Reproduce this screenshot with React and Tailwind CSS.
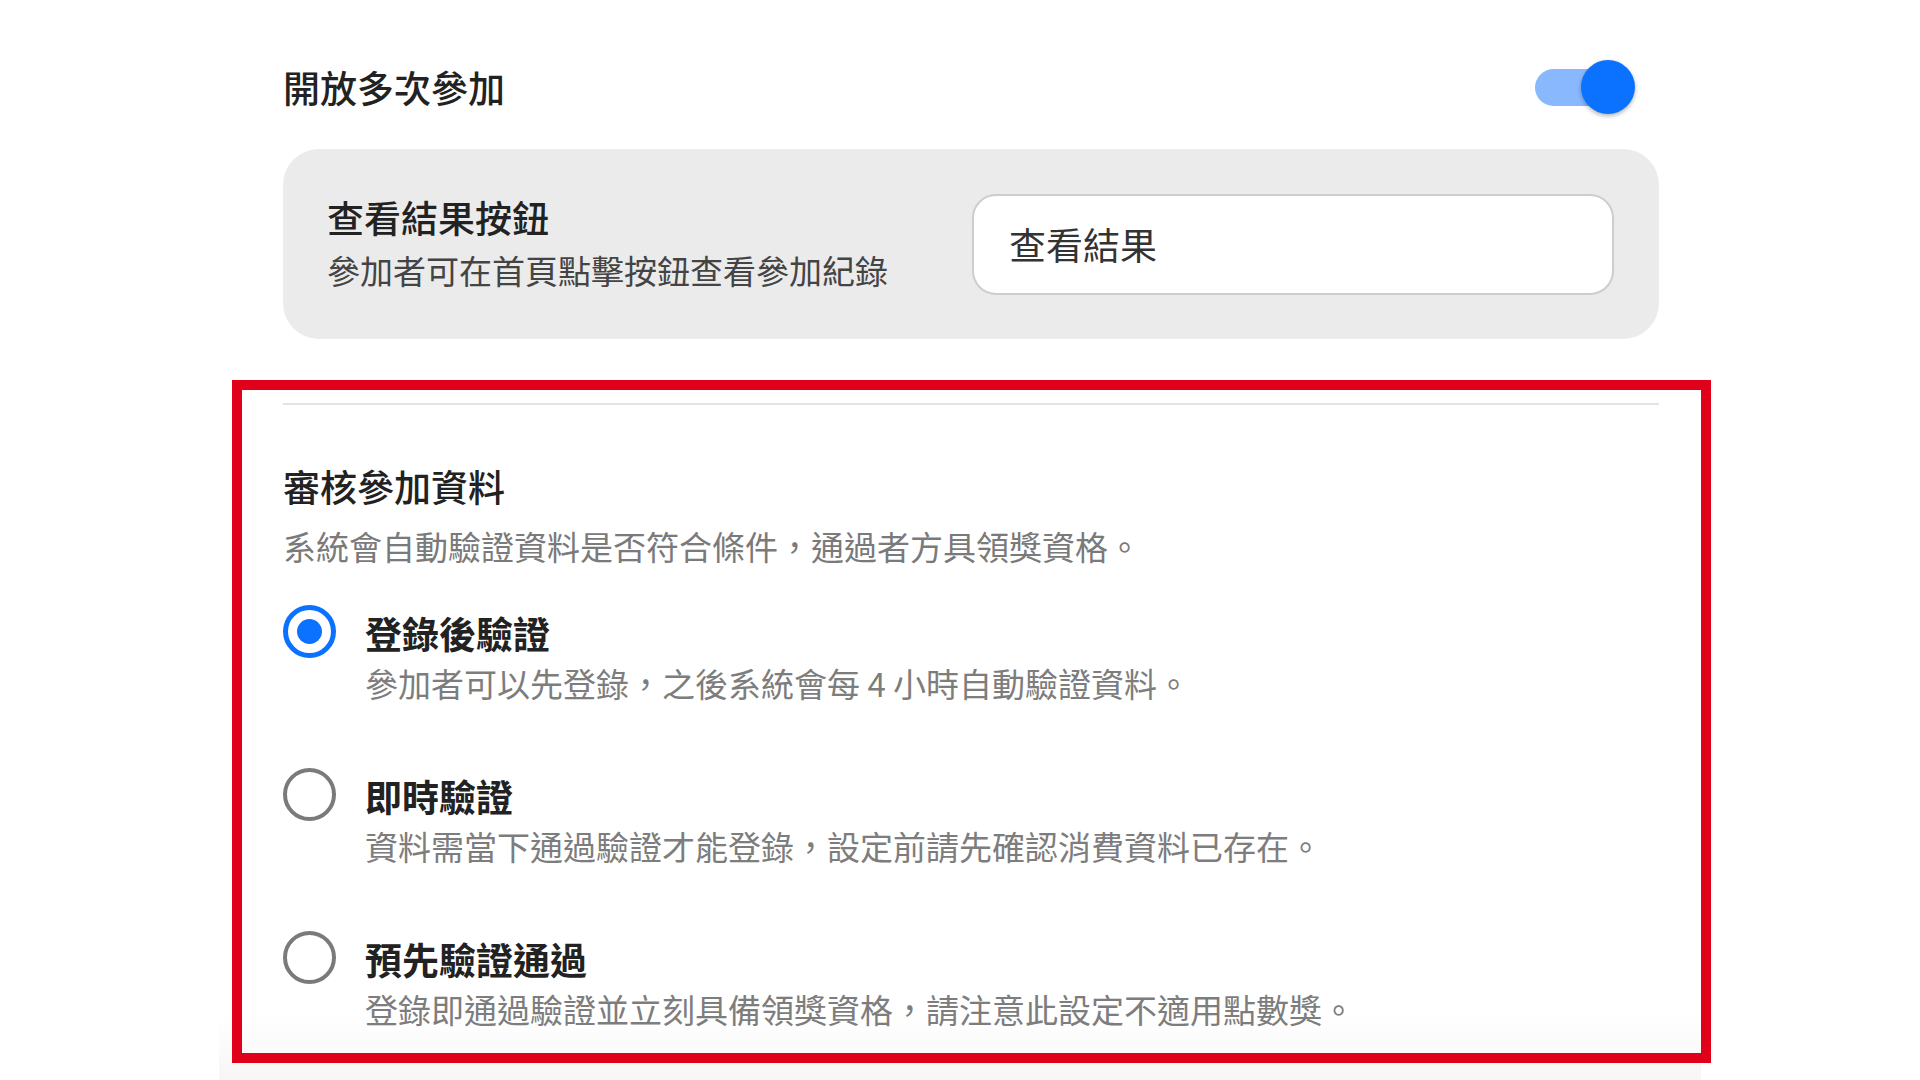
import React, { useState } from "react";

const options = [
  {
    id: "after",
    title: "登錄後驗證",
    desc: "參加者可以先登錄，之後系統會每 4 小時自動驗證資料。",
  },
  {
    id: "instant",
    title: "即時驗證",
    desc: "資料需當下通過驗證才能登錄，設定前請先確認消費資料已存在。",
  },
  {
    id: "pre",
    title: "預先驗證通過",
    desc: "登錄即通過驗證並立刻具備領獎資格，請注意此設定不適用點數獎。",
  },
];

const Radio = ({ checked }) => (
  <div
    className={`mt-[-3px] flex h-[53px] w-[53px] shrink-0 items-center justify-center rounded-full ${
      checked ? "border-[5px] border-[#0b72ff]" : "border-[4px] border-[#7a7a7a]"
    }`}
  >
    {checked && <div className="h-[25px] w-[25px] rounded-full bg-[#0b72ff]" />}
  </div>
);

export default function App() {
  const [multi, setMulti] = useState(true);
  const [mode, setMode] = useState("after");

  return (
    <div className="relative h-[1080px] w-[1920px] overflow-hidden bg-white font-['Noto_Sans_CJK_TC','Noto_Sans',sans-serif]">
      {/* bottom fade */}
      <div className="pointer-events-none absolute left-[219px] top-[1015px] h-[65px] w-[1482px] bg-gradient-to-b from-white to-[#f6f6f6]" />

      <div className="relative z-10 ml-[283px] w-[1376px]">
        {/* Multiple join toggle */}
        <div className="mt-[60px] flex h-[54px] items-center justify-between">
          <h2 className="text-[37px] font-medium leading-[54px] text-[#222]">開放多次參加</h2>
          <button
            type="button"
            onClick={() => setMulti(!multi)}
            className="relative mr-[24px] h-[54px] w-[100px]"
          >
            <span
              className={`absolute left-0 top-[9px] h-[37px] w-[88px] rounded-full ${
                multi ? "bg-[#8ab8ff]" : "bg-[#cfcfcf]"
              }`}
            />
            <span
              className={`absolute top-0 h-[54px] w-[54px] rounded-full shadow-[0_2px_4px_rgba(0,0,0,0.3)] ${
                multi ? "right-0 bg-[#0a72ff]" : "left-[-8px] bg-white"
              }`}
            />
          </button>
        </div>

        {/* Result button */}
        <div className="mt-[35px] flex h-[190px] items-center justify-between rounded-[36px] bg-[#ebebeb] pl-[44px] pr-[45px]">
          <div>
            <div className="text-[37px] font-medium leading-[53px] text-[#222]">查看結果按鈕</div>
            <div className="text-[33px] leading-[53px] text-[#444]">參加者可在首頁點擊按鈕查看參加紀錄</div>
          </div>
          <input
            defaultValue="查看結果"
            className="h-[101px] w-[642px] rounded-[24px] border-2 border-[#cdcdcd] bg-white px-[35px] text-[37px] text-[#333] outline-none"
          />
        </div>

        {/* Verify section (highlighted) */}
        <div className="ml-[-51px] mr-[-52px] mt-[41px] border-[10px] border-[#e0001a] pb-[19px] pl-[41px] pr-[42px] pt-[13px]">
          <div className="h-[2px] bg-[#e3e3e3]" />
          <h3 className="mt-[56px] text-[37px] font-medium leading-[50px] text-[#222]">審核參加資料</h3>
          <p className="mt-[10px] text-[33px] leading-[50px] text-[#7a7a7a]">
            系統會自動驗證資料是否符合條件，通過者方具領獎資格。
          </p>

          <div className="mt-[37px] flex flex-col gap-[63px]">
            {options.map((o) => (
              <label
                key={o.id}
                onClick={() => setMode(o.id)}
                className="flex cursor-pointer items-start gap-[29px]"
              >
                <Radio checked={mode === o.id} />
                <div>
                  <div className="text-[37px] font-semibold leading-[50px] text-[#222]">{o.title}</div>
                  <div className="text-[33px] leading-[50px] text-[#7d7d7d]">{o.desc}</div>
                </div>
              </label>
            ))}
          </div>
        </div>
      </div>
    </div>
  );
}
